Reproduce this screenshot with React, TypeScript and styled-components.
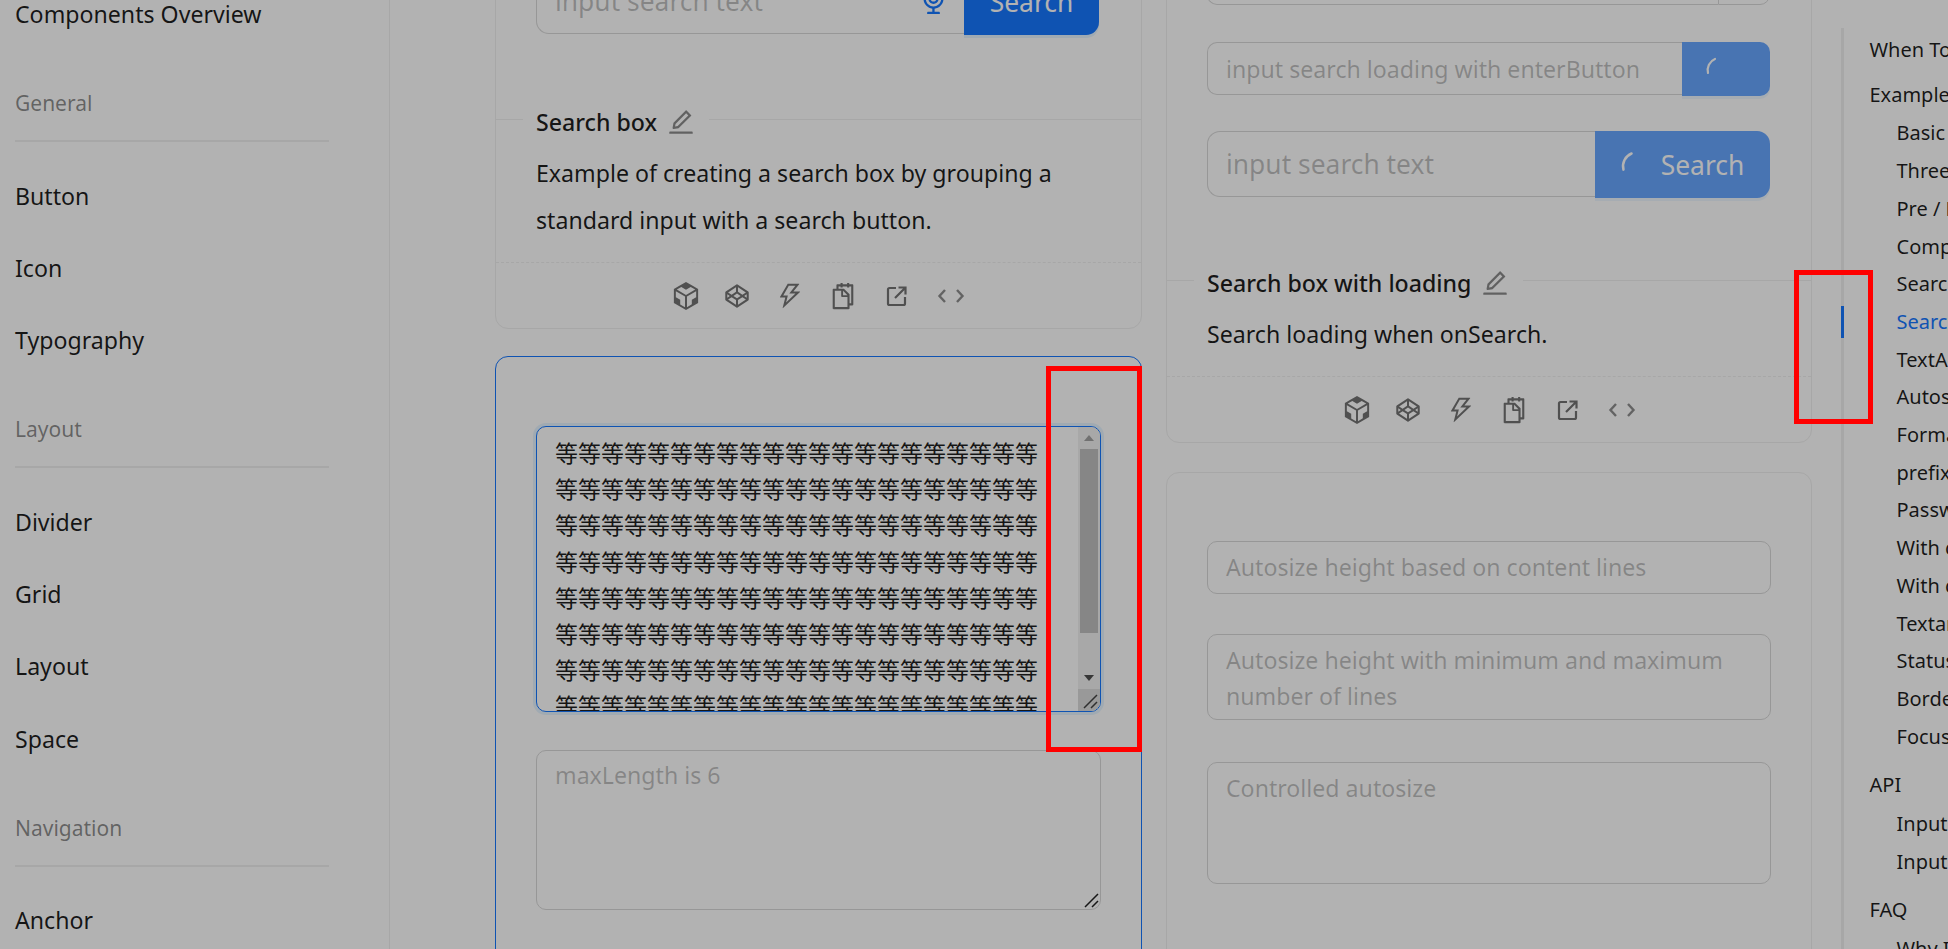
import React from "react";
import styled, { createGlobalStyle } from "styled-components";
import {
  AiOutlineAudio,
  AiOutlineCodepen,
  AiOutlineEdit,
  AiOutlineSearch,
  AiOutlineSnippets,
  AiOutlineThunderbolt,
} from "react-icons/ai";

const GlobalStyle = createGlobalStyle`
  html, body {
    margin: 0;
    height: 100%;
    overflow: hidden;
    background: #fff;
  }
  * {
    box-sizing: border-box;
  }
`;

const FONT = `"Noto Sans", "Noto Sans CJK SC", sans-serif`;

const Page = styled.div`
  position: relative;
  display: flex;
  width: 1948px;
  height: 949px;
  overflow: hidden;
  background: #fff;
  font-family: ${FONT};
  font-size: 23.15px;
  color: rgba(0, 0, 0, 0.88);
`;

const Mask = styled.div`
  position: absolute;
  inset: 0;
  background: rgba(0, 0, 0, 0.3);
  pointer-events: none;
`;

const Highlight = styled.div<{ $x: number; $y: number; $w: number; $h: number }>`
  position: absolute;
  left: ${(p) => p.$x}px;
  top: ${(p) => p.$y}px;
  width: ${(p) => p.$w}px;
  height: ${(p) => p.$h}px;
  border: 5px solid #ff0000;
  pointer-events: none;
`;

/* left menu */
const Sidebar = styled.nav`
  flex: 0 0 390px;
  height: 1000px;
  padding-left: 15px;
  border-right: 1px solid #f0f0f0;
  margin-top: -21.8px;
`;

const MenuItem = styled.div`
  height: 72.4px;
  display: flex;
  align-items: center;
  white-space: nowrap;
`;

const MenuGroup = styled.div`
  width: 314px;
  height: 76px;
  margin-top: 15.8px;
  margin-bottom: 17px;
  display: flex;
  align-items: center;
  font-size: 21px;
  color: rgba(0, 0, 0, 0.45);
  border-bottom: 2px solid rgba(5, 5, 5, 0.06);
`;

/* demo cards */
const Main = styled.main`
  flex: 0 0 auto;
  display: grid;
  grid-template-columns: 646.5px 646px;
  column-gap: 24.5px;
  align-items: start;
  padding-left: 105px;
`;

const Column = styled.div<{ $offset: number }>`
  margin-top: ${(p) => p.$offset}px;
  display: flex;
  flex-direction: column;
`;

const Card = styled.section<{ $active?: boolean; $gap?: number }>`
  border: 1px solid ${(p) => (p.$active ? "#1677ff" : "#f0f0f0")};
  border-radius: 13px;
  margin-top: ${(p) => p.$gap ?? 0}px;
  background: #fff;
`;

const Demo = styled.div<{ $top: number; $bottom: number }>`
  padding: ${(p) => p.$top}px 40px ${(p) => p.$bottom}px;
`;

const Meta = styled.div`
  border-top: 1px solid #f0f0f0;
`;

const TitleRow = styled.div`
  display: flex;
  width: fit-content;
  align-items: center;
  gap: 9px;
  height: 36px;
  margin: -16px 0 0 27px;
  padding: 0 13px;
  background: #fff;
  font-weight: 500;
`;

const EditLink = styled.span`
  display: inline-flex;
  font-size: 30px;
  color: rgba(0, 0, 0, 0.45);
`;

const Description = styled.p`
  margin: 9.5px 0 0;
  padding: 0 40px 18.5px;
  line-height: 47px;
`;

const Actions = styled.div`
  height: 66px;
  display: flex;
  align-items: center;
  justify-content: center;
  border-top: 1px dashed #f0f0f0;
  font-size: 30px;
  color: rgba(0, 0, 0, 0.55);
`;

const ActionSlot = styled.span<{ $shift?: number }>`
  flex: 0 0 53px;
  display: flex;
  justify-content: center;
  margin-left: ${(p) => p.$shift ?? 0}px;
  svg {
    display: block;
  }
`;

const SearchRow = styled.div<{ $gap?: number }>`
  display: flex;
  align-items: flex-start;
  margin: ${(p) => p.$gap ?? 0}px 1.5px 0 0;
`;

const SearchInput = styled.input<{ $large?: boolean }>`
  flex: 1;
  min-width: 0;
  height: ${(p) => (p.$large ? 66 : 53)}px;
  padding: 0 18px;
  border: 1px solid #d9d9d9;
  border-right: 0;
  border-radius: ${(p) => (p.$large ? "13px 0 0 13px" : "10px 0 0 10px")};
  outline: none;
  background: #fff;
  font-family: ${FONT};
  font-size: ${(p) => (p.$large ? 26.4 : 23.15)}px;
  color: rgba(0, 0, 0, 0.88);
  &::placeholder {
    color: rgba(0, 0, 0, 0.25);
  }
`;

const SearchInputWrap = styled.div`
  position: relative;
  flex: 1;
  display: flex;
`;

const MicIcon = styled.span`
  position: absolute;
  right: 15px;
  top: 17px;
  display: flex;
  font-size: 31px;
  color: #1677ff;
`;

const PrimaryButton = styled.button<{ $width: number; $large?: boolean; $loading?: boolean }>`
  flex: 0 0 ${(p) => p.$width}px;
  height: ${(p) => (p.$large ? 67 : 54)}px;
  margin-bottom: -1px;
  display: flex;
  align-items: center;
  justify-content: ${(p) => (p.$large ? "center" : "flex-start")};
  gap: 11px;
  padding: 0 0 0 ${(p) => (p.$large ? 0 : 23)}px;
  border: 0;
  border-radius: ${(p) => (p.$large ? "0 13px 13px 0" : "0 10px 10px 0")};
  background: #1677ff;
  opacity: ${(p) => (p.$loading ? 0.65 : 1)};
  box-shadow: 0 3px 0 rgba(5, 145, 255, 0.1);
  font-family: ${FONT};
  font-size: 26.4px;
  color: #fff;
`;

const AddonButton = styled.button`
  flex: 0 0 52px;
  height: 53px;
  border: 1px solid #d9d9d9;
  border-radius: 0 10px 10px 0;
  background: #fff;
  font-size: 23px;
  color: rgba(0, 0, 0, 0.45);
`;

const TextArea = styled.textarea<{ $height: number; $gap?: number }>`
  display: block;
  width: 100%;
  height: ${(p) => p.$height}px;
  margin-top: ${(p) => p.$gap ?? 0}px;
  padding: 6.6px 18px;
  border: 1px solid #d9d9d9;
  border-radius: 10px;
  outline: none;
  resize: none;
  background: #fff;
  font-family: ${FONT};
  font-size: 23.15px;
  line-height: 36.14px;
  overflow: hidden;
  &::placeholder {
    color: rgba(0, 0, 0, 0.25);
  }
`;

const GripBox = styled.div`
  position: relative;
`;

const Grip = styled.svg`
  position: absolute;
  right: 2px;
  bottom: 2px;
  width: 15px;
  height: 15px;
`;

/* focused textarea with its scrollbar */
const FocusBox = styled.div`
  display: flex;
  height: 286px;
  border: 1px solid #1677ff;
  border-radius: 10px;
  box-shadow: 0 0 0 3px rgba(5, 145, 255, 0.1);
  overflow: hidden;
  background: #fff;
`;

const FocusText = styled.div`
  flex: 1;
  min-width: 0;
  padding: 8.6px 18px 0;
  font-size: 23px;
  line-height: 36.14px;
  overflow: hidden;
  word-break: break-all;
  color: rgba(0, 0, 0, 0.88);
`;

const ScrollBar = styled.div`
  flex: 0 0 22px;
  display: flex;
  flex-direction: column;
  align-items: center;
  background: #f1f1f1;
`;

const ArrowCell = styled.div`
  flex: 0 0 22px;
  width: 100%;
  display: flex;
  align-items: center;
  justify-content: center;
`;

const Arrow = styled.div<{ $down?: boolean }>`
  width: 0;
  height: 0;
  border-left: 5px solid transparent;
  border-right: 5px solid transparent;
  ${(p) => (p.$down ? "border-top: 6px solid #505050;" : "border-bottom: 6px solid #a3a3a3;")}
`;

const ThumbTrack = styled.div`
  flex: 1;
  width: 100%;
  display: flex;
  justify-content: center;
`;

const Thumb = styled.div`
  width: 18px;
  height: 184px;
  background: #c1c1c1;
`;

const ResizeCorner = styled.div`
  position: relative;
  flex: 0 0 22px;
  width: 100%;
  background: #dcdcdc;
`;

/* anchor on the right */
const Anchor = styled.aside`
  position: relative;
  flex: 0 0 auto;
  margin: 28px 0 0 28.5px;
  padding: 3px 0 0 26px;
  border-left: 3px solid rgba(5, 5, 5, 0.06);
  height: 1000px;
  font-size: 20px;
  line-height: 37.7px;
  white-space: nowrap;
`;

const AnchorInk = styled.div`
  position: absolute;
  left: -3px;
  top: 278px;
  width: 3px;
  height: 32px;
  background: #1677ff;
`;

const AnchorTop = styled.div<{ $gap?: number }>`
  margin-top: ${(p) => p.$gap ?? 0}px;
  margin-bottom: 1px;
`;

const AnchorSub = styled.div<{ $active?: boolean }>`
  padding-left: 27px;
  color: ${(p) => (p.$active ? "#1677ff" : "inherit")};
`;

const MENU: { label: string; group?: boolean }[] = [
  { label: "Components Overview" },
  { label: "General", group: true },
  { label: "Button" },
  { label: "Icon" },
  { label: "Typography" },
  { label: "Layout", group: true },
  { label: "Divider" },
  { label: "Grid" },
  { label: "Layout" },
  { label: "Space" },
  { label: "Navigation", group: true },
  { label: "Anchor" },
];

function SandboxIcon() {
  return (
    <svg width="28" height="28" viewBox="0 0 1024 1024" fill="currentColor">
      <path d="M755 140.3l0.5-0.3h0.3L512 0 268.3 140h-0.3l0.8 0.4L68.6 256v512L512 1024l443.4-256V256L755 140.3z m-30 506.4v171.2L548 920.1V534.7L883.4 341v215.7l-158.4 90z m-584.4-90.6V340.8L476 534.4v385.7L300 818.5V646.7l-159.4-90.6zM511.7 280l171.1-98.3 166.3 96-336.9 194.5-337-194.6 165.7-95.7L511.7 280z" />
    </svg>
  );
}

function ExternalIcon() {
  return (
    <svg width="26" height="26" viewBox="0 0 26 26" fill="none" stroke="currentColor" strokeWidth="2.2">
      <path d="M13 5H6.5A1.5 1.5 0 0 0 5 6.5v14A1.5 1.5 0 0 0 6.5 22h14a1.5 1.5 0 0 0 1.5-1.5V14" />
      <path d="M12 15 21.5 5.5M15.5 4.5h7v7" />
    </svg>
  );
}

function CodeIcon() {
  return (
    <svg width="30" height="26" viewBox="0 0 30 26" fill="none" stroke="currentColor" strokeWidth="2.4" opacity="0.8">
      <path d="M9 7 3.5 13 9 19M21 7l5.5 6-5.5 6" />
    </svg>
  );
}

function Spinner({ size }: { size: number }) {
  return (
    <svg width={size} height={size} viewBox="0 0 26 26" fill="none" stroke="currentColor" strokeWidth="2.2" strokeLinecap="round">
      <path d="M3 17A12 12 0 0 1 10 3" />
    </svg>
  );
}

function DemoActions() {
  return (
    <Actions>
      <ActionSlot>
        <SandboxIcon />
      </ActionSlot>
      <ActionSlot $shift={-2}>
        <AiOutlineCodepen />
      </ActionSlot>
      <ActionSlot>
        <AiOutlineThunderbolt />
      </ActionSlot>
      <ActionSlot>
        <AiOutlineSnippets />
      </ActionSlot>
      <ActionSlot>
        <ExternalIcon />
      </ActionSlot>
      <ActionSlot $shift={2}>
        <CodeIcon />
      </ActionSlot>
    </Actions>
  );
}

function ResizeGrip({ color }: { color: string }) {
  return (
    <Grip viewBox="0 0 15 15" fill="none" stroke={color} strokeWidth="1.5">
      <path d="M1 14 14 1M8 14l6-6" />
    </Grip>
  );
}

function CardMeta({ title, children }: { title: string; children: React.ReactNode }) {
  return (
    <Meta>
      <TitleRow>
        {title}
        <EditLink>
          <AiOutlineEdit />
        </EditLink>
      </TitleRow>
      <Description>{children}</Description>
      <DemoActions />
    </Meta>
  );
}

export default function App() {
  return (
    <Page>
      <GlobalStyle />
      <Sidebar>
        {MENU.map((m, i) =>
          m.group ? <MenuGroup key={i}>{m.label}</MenuGroup> : <MenuItem key={i}>{m.label}</MenuItem>
        )}
      </Sidebar>

      <Main>
        <Column $offset={-80}>
          <Card>
            <Demo $top={47} $bottom={85}>
              <SearchRow>
                <SearchInputWrap>
                  <SearchInput $large placeholder="input search text" />
                  <MicIcon>
                    <AiOutlineAudio />
                  </MicIcon>
                </SearchInputWrap>
                <PrimaryButton $large $width={135}>Search</PrimaryButton>
              </SearchRow>
            </Demo>
            <CardMeta title="Search box">
              Example of creating a search box by grouping a standard input with a search button.
            </CardMeta>
          </Card>

          <Card $active $gap={26.5}>
            <Demo $top={69} $bottom={200}>
              <FocusBox>
                <FocusText>{"等".repeat(180)}</FocusText>
                <ScrollBar>
                  <ArrowCell>
                    <Arrow />
                  </ArrowCell>
                  <ThumbTrack>
                    <Thumb />
                  </ThumbTrack>
                  <ArrowCell>
                    <Arrow $down />
                  </ArrowCell>
                  <ResizeCorner>
                    <ResizeGrip color="#444" />
                  </ResizeCorner>
                </ScrollBar>
              </FocusBox>
              <GripBox>
                <TextArea $height={160} $gap={38} placeholder="maxLength is 6" />
                <ResizeGrip color="#222" />
              </GripBox>
            </Demo>
          </Card>
        </Column>

        <Column $offset={-100}>
          <Card>
            <Demo $top={51} $bottom={83}>
              <SearchRow>
                <SearchInput placeholder="input search text" />
                <AddonButton>
                  <AiOutlineSearch />
                </AddonButton>
              </SearchRow>
              <SearchRow $gap={37}>
                <SearchInput placeholder="input search loading with enterButton" />
                <PrimaryButton $width={88} $loading>
                  <Spinner size={26} />
                </PrimaryButton>
              </SearchRow>
              <SearchRow $gap={36}>
                <SearchInput $large placeholder="input search text" />
                <PrimaryButton $large $loading $width={175}>
                  <Spinner size={30} />
                  Search
                </PrimaryButton>
              </SearchRow>
            </Demo>
            <CardMeta title="Search box with loading">Search loading when onSearch.</CardMeta>
          </Card>

          <Card $gap={29}>
            <Demo $top={68} $bottom={200}>
              <TextArea $height={53} placeholder="Autosize height based on content lines" />
              <TextArea $height={86} $gap={40} placeholder="Autosize height with minimum and maximum number of lines" />
              <TextArea $height={122} $gap={42} placeholder="Controlled autosize" />
            </Demo>
          </Card>
        </Column>
      </Main>

      <Anchor>
        <AnchorInk />
        <AnchorTop>When To Use</AnchorTop>
        <AnchorTop $gap={7}>Examples</AnchorTop>
        <AnchorSub>Basic usage</AnchorSub>
        <AnchorSub>Three sizes of Input</AnchorSub>
        <AnchorSub>Pre / Post tab</AnchorSub>
        <AnchorSub>Compact Style</AnchorSub>
        <AnchorSub>Search box</AnchorSub>
        <AnchorSub $active>Search box with loading</AnchorSub>
        <AnchorSub>TextArea</AnchorSub>
        <AnchorSub>Autosizing the height to fit the content</AnchorSub>
        <AnchorSub>Format Tooltip Input</AnchorSub>
        <AnchorSub>prefix and suffix</AnchorSub>
        <AnchorSub>Password box</AnchorSub>
        <AnchorSub>With clear icon</AnchorSub>
        <AnchorSub>With character counting</AnchorSub>
        <AnchorSub>Textarea with character counting</AnchorSub>
        <AnchorSub>Status</AnchorSub>
        <AnchorSub>Borderless</AnchorSub>
        <AnchorSub>Focus</AnchorSub>
        <AnchorTop $gap={11}>API</AnchorTop>
        <AnchorSub>Input</AnchorSub>
        <AnchorSub>Input.TextArea</AnchorSub>
        <AnchorTop $gap={11}>FAQ</AnchorTop>
        <AnchorSub>Why Input lose focus when change prefix/suffix/showCount</AnchorSub>
      </Anchor>

      <Mask />
      <Highlight $x={1046} $y={366} $w={96} $h={386} />
      <Highlight $x={1794} $y={270} $w={79} $h={154} />
    </Page>
  );
}
